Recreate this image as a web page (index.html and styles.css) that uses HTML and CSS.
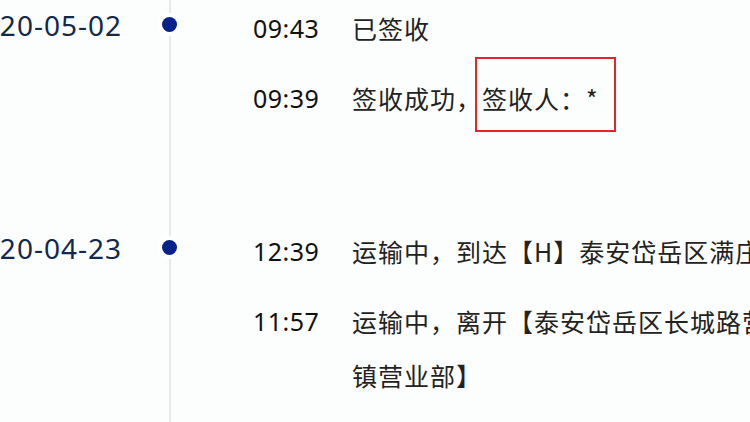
FILE: index.html
```html
<!DOCTYPE html>
<html lang="zh-CN">
<head>
<meta charset="utf-8">
<link rel="stylesheet" href="styles.css">
</head>
<body>
<div class="timeline">
  <section class="group first">
    <div class="date">2020-05-02</div>
    <div class="axis"><span class="dot"></span></div>
    <div class="events">
      <div class="event"><span class="time">09:43</span><span class="desc">已签收</span></div>
      <div class="event"><span class="time">09:39</span><span class="desc">签收成功，<span class="mark">签收人：*</span></span></div>
    </div>
  </section>
  <section class="group">
    <div class="date">2020-04-23</div>
    <div class="axis"><span class="dot"></span></div>
    <div class="events">
      <div class="event"><span class="time">12:39</span><span class="desc">运输中，到达【H】泰安岱岳区满庄镇营业部</span></div>
      <div class="event"><span class="time">11:57</span><span class="desc">运输中，离开【泰安岱岳区长城路营业部】，发往【泰安岱岳区满庄镇营业部】</span></div>
    </div>
  </section>
</div>
</body>
</html>
```
FILE: styles.css
```css
html, body {
  margin: 0;
  padding: 0;
  overflow: hidden;
  background: #fcfdfd;
  width: 750px;
  height: 422px;
}
.timeline {
  display: flex;
  flex-direction: column;
  width: 1200px;
}
.group {
  display: flex;
  align-items: flex-start;
  padding-bottom: 99px;
}
.group.first {
  padding-top: 1px;
}
.date {
  width: 122px;
  flex: none;
  display: flex;
  justify-content: flex-end;
  white-space: nowrap;
  font-family: "Noto Sans", "Open Sans", sans-serif;
  font-size: 28px;
  letter-spacing: 1px;
  line-height: 48px;
  color: #13284a;
}
.axis {
  flex: none;
  width: 96px;
  align-self: stretch;
  position: relative;
  margin-top: -110px;
  margin-bottom: -110px;
}
.axis::before {
  content: "";
  position: absolute;
  left: 47px;
  top: 0;
  bottom: 0;
  width: 2px;
  background: #e6e8ea;
}
.dot {
  position: absolute;
  left: 40px;
  top: 126px;
  width: 15px;
  height: 15px;
  border-radius: 50%;
  background: #07218a;
  box-shadow: 0 0 0 4px #ffffff;
}
.events {
  display: flex;
  flex-direction: column;
  gap: 16px;
  padding-left: 35px;
}
.event {
  display: flex;
  align-items: flex-start;
  line-height: 54px;
}
.time {
  flex: none;
  width: 99px;
  font-family: "Noto Sans", "Open Sans", sans-serif;
  font-size: 25px;
  letter-spacing: 0.5px;
  color: #111111;
}
.desc {
  width: 770px;
  font-family: "Noto Sans CJK SC", "Noto Sans", sans-serif;
  font-size: 25px;
  letter-spacing: 1px;
  color: #222222;
}
.mark {
  display: inline-block;
  border: 2px solid #e2262b;
  padding: 12px 15px 5px 5px;
  margin: -14px 0 -7px -7px;
  line-height: 54px;
}
```
